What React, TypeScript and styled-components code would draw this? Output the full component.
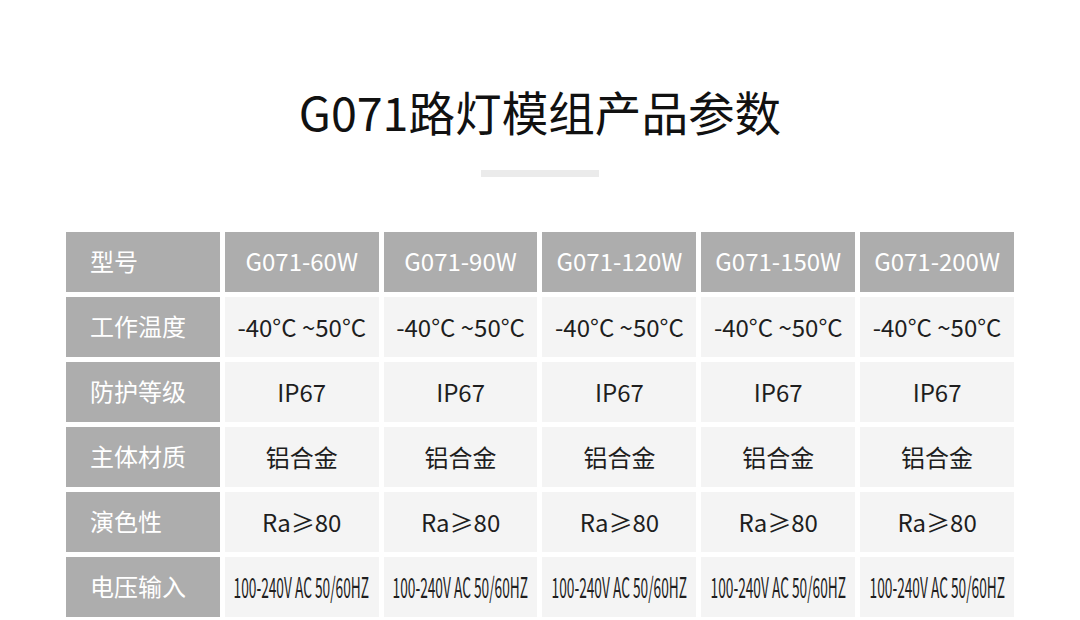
import React from "react";
import styled, { createGlobalStyle } from "styled-components";

const GlobalStyle = createGlobalStyle`
  html, body {
    margin: 0;
    padding: 0;
    background: #ffffff;
  }
  body {
    font-family: "Noto Sans CJK SC", "Noto Sans", sans-serif;
    color: #222222;
  }
`;

const models = ["G071-60W", "G071-90W", "G071-120W", "G071-150W", "G071-200W"];

const rows: { label: string; value: string; condensed?: boolean }[] = [
  { label: "工作温度", value: "-40°C ~50°C" },
  { label: "防护等级", value: "IP67" },
  { label: "主体材质", value: "铝合金" },
  { label: "演色性", value: "Ra≥80" },
  { label: "电压输入", value: "100-240V AC 50/60HZ", condensed: true },
];

export default function App() {
  return (
    <>
      <GlobalStyle />
      <Page>
        <Title>G071路灯模组产品参数</Title>
        <Divider />
        <Table>
          <LabelCell>型号</LabelCell>
          {models.map((m) => (
            <HeadCell key={m}>{m}</HeadCell>
          ))}
          {rows.map((row) => (
            <React.Fragment key={row.label}>
              <LabelCell>{row.label}</LabelCell>
              {models.map((m) => (
                <DataCell key={m}>
                  <Value $condensed={row.condensed}>{row.value}</Value>
                </DataCell>
              ))}
            </React.Fragment>
          ))}
        </Table>
      </Page>
    </>
  );
}

const Page = styled.main`
  width: 1080px;
  height: 620px;
  overflow: hidden;
  display: flex;
  flex-direction: column;
  align-items: center;
  padding-top: 80px;
  box-sizing: border-box;
`;

const Title = styled.h1`
  margin: 0;
  font-size: 46.6px;
  line-height: 62px;
  font-weight: 400;
  color: #111111;
`;

const Divider = styled.div`
  width: 118px;
  height: 7px;
  background: #ebebeb;
  margin-top: 28px;
`;

const Table = styled.section`
  margin-top: 55px;
  width: 948px;
  display: grid;
  grid-template-columns: repeat(6, 1fr);
  grid-auto-rows: 60px;
  gap: 5px;
`;

const LabelCell = styled.div`
  background: #adadad;
  color: #ffffff;
  font-size: 24px;
  display: flex;
  align-items: center;
  padding-left: 24px;
  padding-bottom: 3px;
`;

const HeadCell = styled.div`
  background: #adadad;
  color: #ffffff;
  font-size: 24px;
  display: flex;
  align-items: center;
  justify-content: center;
  padding-bottom: 3px;
`;

const DataCell = styled.div`
  background: #f4f4f4;
  color: #1e1e1e;
  font-size: 24px;
  display: flex;
  align-items: center;
  justify-content: center;
  overflow: hidden;
  padding-bottom: 2px;
`;

const Value = styled.span<{ $condensed?: boolean }>`
  white-space: nowrap;
  display: inline-block;
  font-size: ${({ $condensed }) => ($condensed ? "28px" : "inherit")};
  transform: ${({ $condensed }) => ($condensed ? "scaleX(0.49)" : "none")};
`;
